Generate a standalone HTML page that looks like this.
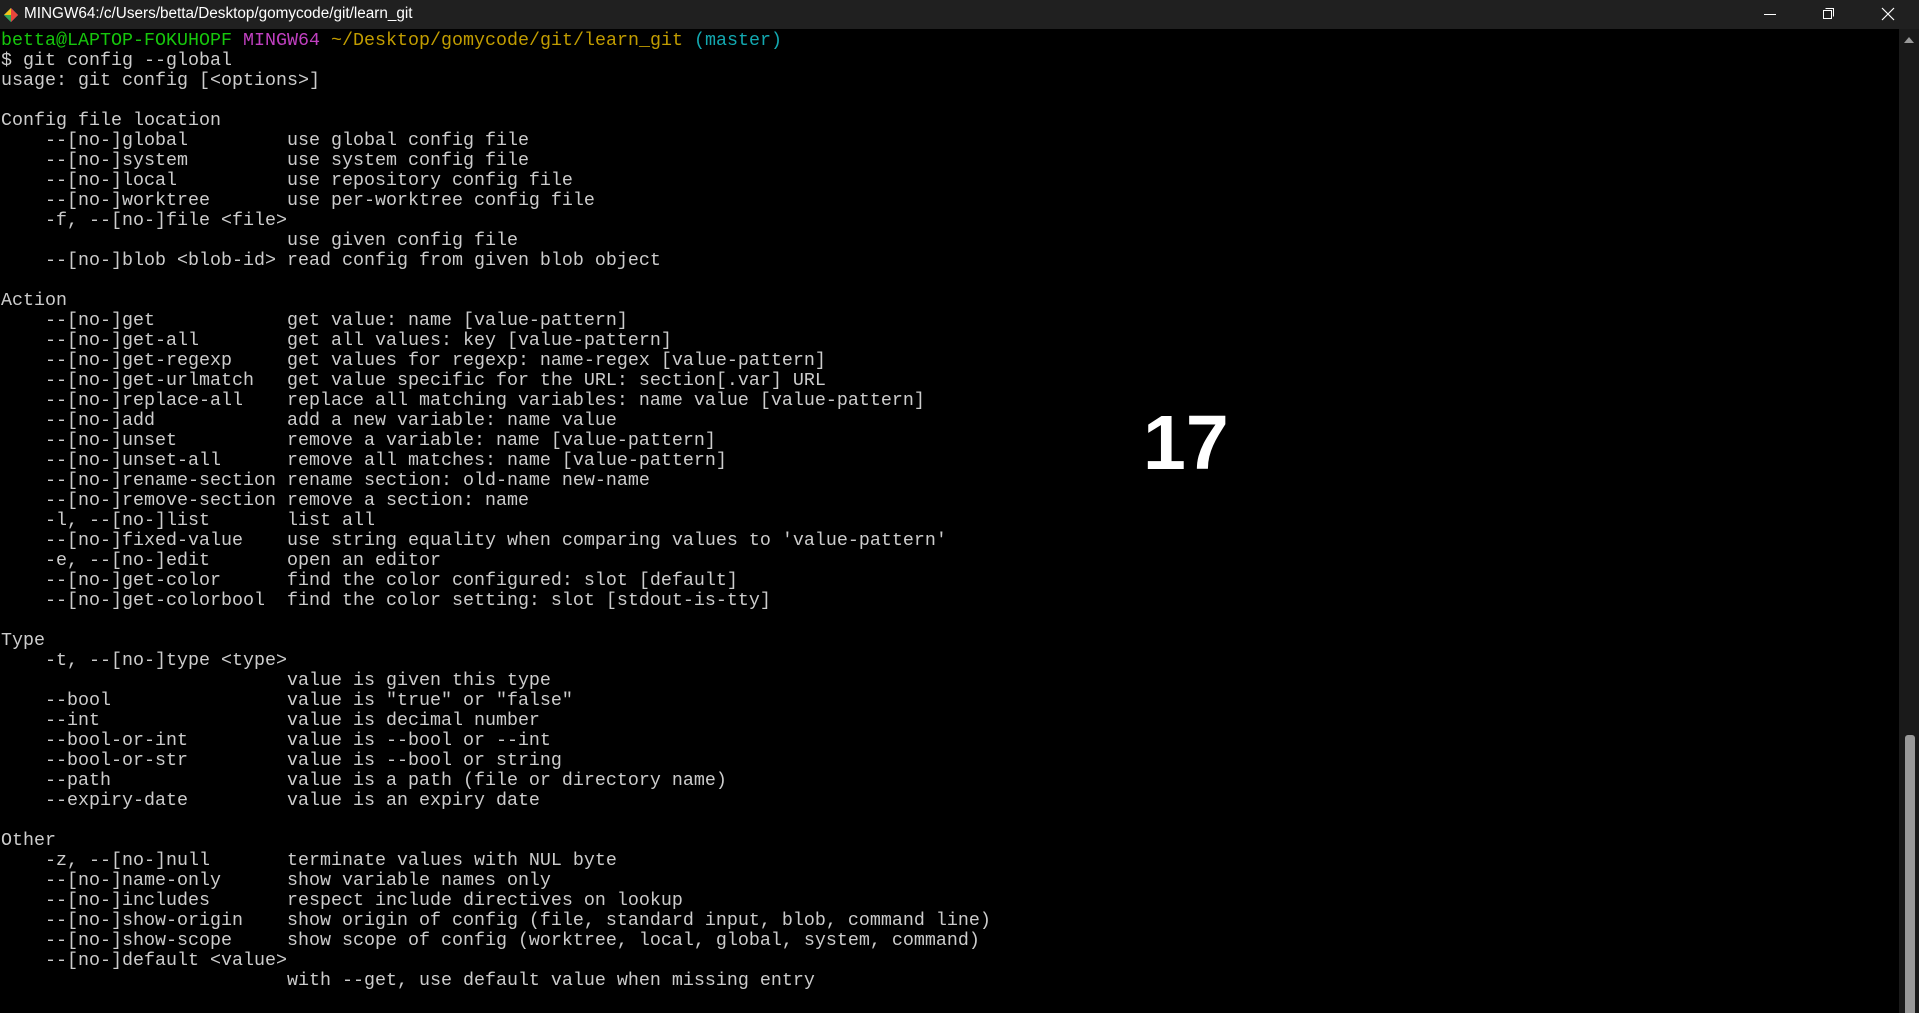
<!DOCTYPE html>
<html><head><meta charset="utf-8"><style>
html,body{margin:0;padding:0;background:#000;width:1919px;height:1013px;overflow:hidden;}
#title{position:absolute;left:0;top:0;width:1919px;height:29px;background:#202020;}
#title .t{position:absolute;left:24px;top:5px;font:15.3px "Liberation Sans",sans-serif;color:#fff;}
#term{position:absolute;left:1px;top:31px;margin:0;font-family:"Liberation Mono",monospace;font-size:18.33px;line-height:20px;color:#cccccc;white-space:pre;}
.g{color:#16c60c}.m{color:#c040c0}.y{color:#c19c00}.c{color:#13a8b0}
#sb{position:absolute;left:1899px;top:29px;width:20px;height:984px;background:#1a1a1a;}
#thumb{position:absolute;left:1905px;top:735px;width:10px;height:278px;background:#999;border-radius:3px 3px 0 0;}
#big{position:absolute;left:1143px;top:399px;font:bold 77px "Liberation Sans",sans-serif;color:#fff;}
</style></head><body>
<div id="title">
<svg style="position:absolute;left:3px;top:7px" width="16" height="16" viewBox="0 0 16 16"><path d="M8 1L15 8L8 15L1 8Z" fill="#4a90d9"/><path d="M8 1L15 8L8 15Z" fill="#e8453c"/><path d="M1 8L8 1L8 8Z" fill="#f5c518"/><path d="M1 8L8 8L8 15Z" fill="#34a853"/></svg>
<span class="t">MINGW64:/c/Users/betta/Desktop/gomycode/git/learn_git</span>
<svg style="position:absolute;left:1763px;top:8px" width="14" height="14"><line x1="1" y1="6.5" x2="13" y2="6.5" stroke="#fff" stroke-width="1"/></svg>
<svg style="position:absolute;left:1822px;top:7px" width="14" height="14"><rect x="1.5" y="3.5" width="8" height="8" fill="none" stroke="#fff"/><path d="M3.5 1.5H11.5V9.5" fill="none" stroke="#fff"/></svg>
<svg style="position:absolute;left:1881px;top:7px" width="14" height="14"><path d="M1 1L13 13M13 1L1 13" stroke="#fff" stroke-width="1.2"/></svg>
</div>
<pre id="term"><span class="g">betta@LAPTOP-FOKUHOPF</span> <span class="m">MINGW64</span> <span class="y">~/Desktop/gomycode/git/learn_git</span> <span class="c">(master)</span>
$ git config --global
usage: git config [&lt;options&gt;]

Config file location
    --[no-]global         use global config file
    --[no-]system         use system config file
    --[no-]local          use repository config file
    --[no-]worktree       use per-worktree config file
    -f, --[no-]file &lt;file&gt;
                          use given config file
    --[no-]blob &lt;blob-id&gt; read config from given blob object

Action
    --[no-]get            get value: name [value-pattern]
    --[no-]get-all        get all values: key [value-pattern]
    --[no-]get-regexp     get values for regexp: name-regex [value-pattern]
    --[no-]get-urlmatch   get value specific for the URL: section[.var] URL
    --[no-]replace-all    replace all matching variables: name value [value-pattern]
    --[no-]add            add a new variable: name value
    --[no-]unset          remove a variable: name [value-pattern]
    --[no-]unset-all      remove all matches: name [value-pattern]
    --[no-]rename-section rename section: old-name new-name
    --[no-]remove-section remove a section: name
    -l, --[no-]list       list all
    --[no-]fixed-value    use string equality when comparing values to 'value-pattern'
    -e, --[no-]edit       open an editor
    --[no-]get-color      find the color configured: slot [default]
    --[no-]get-colorbool  find the color setting: slot [stdout-is-tty]

Type
    -t, --[no-]type &lt;type&gt;
                          value is given this type
    --bool                value is "true" or "false"
    --int                 value is decimal number
    --bool-or-int         value is --bool or --int
    --bool-or-str         value is --bool or string
    --path                value is a path (file or directory name)
    --expiry-date         value is an expiry date

Other
    -z, --[no-]null       terminate values with NUL byte
    --[no-]name-only      show variable names only
    --[no-]includes       respect include directives on lookup
    --[no-]show-origin    show origin of config (file, standard input, blob, command line)
    --[no-]show-scope     show scope of config (worktree, local, global, system, command)
    --[no-]default &lt;value&gt;
                          with --get, use default value when missing entry
</pre>
<div id="sb"></div>
<svg style="position:absolute;left:1903px;top:36px" width="12" height="8"><path d="M1 7L6 1L11 7Z" fill="#999"/></svg>
<div id="thumb"></div>
<div id="big">17</div>
</body></html>
